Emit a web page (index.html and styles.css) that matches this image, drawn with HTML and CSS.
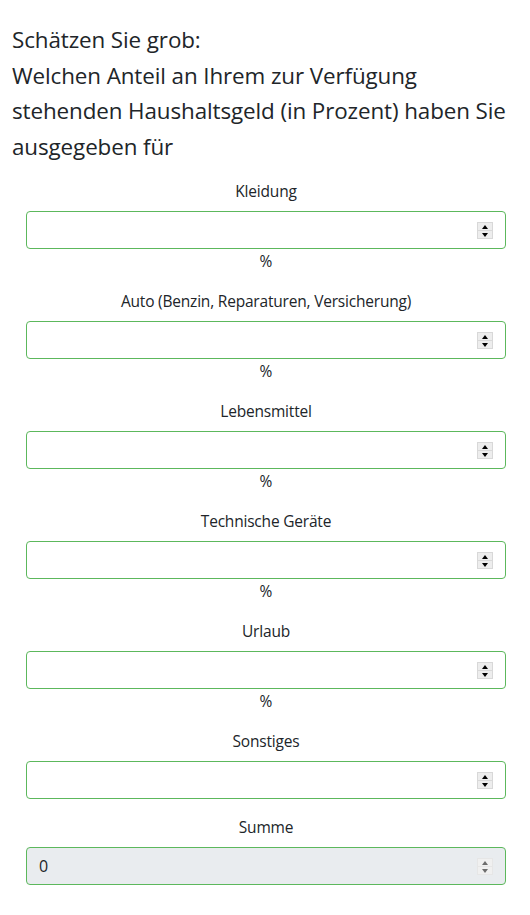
FILE: index.html
```html
<!DOCTYPE html>
<html lang="de">
<head>
<meta charset="utf-8">
<link rel="stylesheet" href="styles.css">
<title>Haushaltsgeld</title>
</head>
<body>
<main class="page">
  <h1 class="question">Schätzen Sie grob:<br>Welchen Anteil an Ihrem zur Verfügung stehenden Haushaltsgeld (in Prozent) haben Sie ausgegeben für</h1>
  <form class="fields">
    <div class="group">
      <label class="label" for="f1">Kleidung</label>
      <div class="field"><input class="input" id="f1" type="number"><span class="spin"><span class="up"></span><span class="down"></span></span></div>
      <div class="unit">%</div>
    </div>
    <div class="group">
      <label class="label" for="f2">Auto (Benzin, Reparaturen, Versicherung)</label>
      <div class="field"><input class="input" id="f2" type="number"><span class="spin"><span class="up"></span><span class="down"></span></span></div>
      <div class="unit">%</div>
    </div>
    <div class="group">
      <label class="label" for="f3">Lebensmittel</label>
      <div class="field"><input class="input" id="f3" type="number"><span class="spin"><span class="up"></span><span class="down"></span></span></div>
      <div class="unit">%</div>
    </div>
    <div class="group">
      <label class="label" for="f4">Technische Geräte</label>
      <div class="field"><input class="input" id="f4" type="number"><span class="spin"><span class="up"></span><span class="down"></span></span></div>
      <div class="unit">%</div>
    </div>
    <div class="group">
      <label class="label" for="f5">Urlaub</label>
      <div class="field"><input class="input" id="f5" type="number"><span class="spin"><span class="up"></span><span class="down"></span></span></div>
      <div class="unit">%</div>
    </div>
    <div class="group">
      <label class="label" for="f6">Sonstiges</label>
      <div class="field"><input class="input" id="f6" type="number"><span class="spin"><span class="up"></span><span class="down"></span></span></div>
    </div>
    <div class="group">
      <label class="label" for="f7">Summe</label>
      <div class="field"><input class="input input-disabled" id="f7" type="number" value="0" disabled><span class="spin spin-disabled"><span class="up"></span><span class="down"></span></span></div>
    </div>
  </form>
</main>
</body>
</html>
```
FILE: styles.css
```css
* { box-sizing: border-box; }
html, body { margin: 0; padding: 0; background: #fff; }
body {
  font-family: "Open Sans", "Noto Sans", sans-serif;
  color: #212529;
  font-size: 15.5px;
  line-height: 24px;
}
.page { padding: 22px 12px 0 12px; }
.question {
  margin: 0 0 15px 0;
  font-size: 22.4px;
  font-weight: 400;
  line-height: 35.5px;
  letter-spacing: -0.1px;
}
.fields { padding: 0 12px 0 14px; }
.group { margin-bottom: 16px; }
.label {
  display: block;
  text-align: center;
  margin-bottom: 8px;
  letter-spacing: -0.2px;
}
.field { position: relative; }
.input {
  display: block;
  width: 100%;
  height: 38px;
  padding: 6px 12px;
  border: 1px solid #5cb85c;
  border-radius: 4px;
  background: #fff;
  color: #212529;
  font-family: inherit;
  font-size: 16px;
  -moz-appearance: textfield;
  appearance: textfield;
}
.input::-webkit-inner-spin-button,
.input::-webkit-outer-spin-button { -webkit-appearance: none; margin: 0; }
.input-disabled { background: #e9ecef; opacity: 1; }
.unit { text-align: center; }
.spin {
  position: absolute;
  right: 13px;
  top: 11px;
  width: 16px;
  height: 17px;
  display: flex;
  flex-direction: column;
  background: #d8d8d8;
  padding: 1px;
  gap: 1px;
}
.spin .up, .spin .down {
  flex: 1;
  background: #ededed;
  position: relative;
}
.spin .up::after, .spin .down::after {
  content: "";
  position: absolute;
  left: 50%;
  top: 50%;
  transform: translate(-50%, -50%);
  width: 0; height: 0;
  border-left: 3.5px solid transparent;
  border-right: 3.5px solid transparent;
}
.spin .up::after { border-bottom: 4px solid #000; }
.spin .down::after { border-top: 4px solid #000; }
.spin-disabled { background: #e6e6e6; }
.spin-disabled .up, .spin-disabled .down { background: #f0f0f0; }
.spin-disabled .up::after { border-bottom-color: #6d6d6d; }
.spin-disabled .down::after { border-top-color: #6d6d6d; }
```
